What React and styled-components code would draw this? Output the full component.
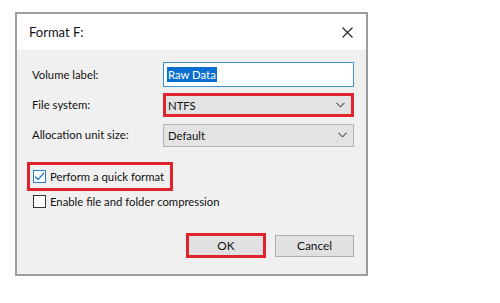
import React from "react";
import styled, { createGlobalStyle } from "styled-components";

const Global = createGlobalStyle`
  html, body { margin: 0; padding: 0; background: #fff; }
  body { font-family: Lato, "Noto Sans", sans-serif; }
`;

const Page = styled.div`
  width: 500px;
  height: 303px;
  padding: 12px 0 0 15px;
  box-sizing: border-box;
`;

const Dialog = styled.div`
  width: 353px;
  height: 264px;
  box-sizing: border-box;
  border: 2px solid #9d9d9d;
  background: #f0f0f0;
  display: flex;
  flex-direction: column;
`;

const TitleBar = styled.div`
  height: 36px;
  background: #fff;
  display: flex;
  align-items: center;
  justify-content: space-between;
  padding: 0 12px 0 12px;
  font-size: 13px;
  color: #111;
`;

const Close = styled.svg`
  width: 11px;
  height: 11px;
  margin-right: 1px;
`;

const Body = styled.div`
  flex: 1;
  padding: 12px 11px 0 15px;
  display: flex;
  flex-direction: column;
`;

const Form = styled.div`
  display: grid;
  grid-template-columns: 131px 191px;
  row-gap: 6px;
  align-items: center;
  font-size: 11.3px;
  color: #111;
`;

const Label = styled.div`
  line-height: 24px;
`;

const TextInput = styled.div`
  height: 25px;
  box-sizing: border-box;
  border: 1px solid #3a92d6;
  background: #fff;
  display: flex;
  align-items: center;
  padding-left: 3px;
`;

const Selected = styled.span`
  background: #0a6fd0;
  color: #fff;
  padding: 0 1px;
  line-height: 15px;
`;

const Combo = styled.div`
  height: ${(p) => (p.$hl ? 24 : 23)}px;
  box-sizing: border-box;
  border: ${(p) => (p.$hl ? "3px solid #e0242d" : "1px solid #b4b4b4")};
  background: #e3e3e3;
  display: flex;
  align-items: center;
  justify-content: space-between;
  padding: 0 6px 0 ${(p) => (p.$hl ? 2 : 4)}px;
`;

const Chevron = styled.svg`
  width: 9px;
  height: 6px;
`;

const Options = styled.div`
  margin-top: 15px;
  margin-left: -5px;
  display: flex;
  flex-direction: column;
  align-items: flex-start;
  font-size: 11.3px;
  color: #111;
`;

const OptionRow = styled.div`
  display: flex;
  align-items: center;
  gap: 4px;
  box-sizing: border-box;
  height: ${(p) => (p.$hl ? 29 : 16)}px;
  padding: 0 6px 0 ${(p) => (p.$hl ? 3 : 6)}px;
  border: ${(p) => (p.$hl ? "3px solid #e0242d" : "none")};
  margin-top: ${(p) => (p.$hl ? 0 : 2)}px;
`;

const Box = styled.div`
  width: 13px;
  height: 13px;
  box-sizing: border-box;
  border: 1px solid ${(p) => (p.$checked ? "#2a7fd0" : "#333")};
  background: #fff;
  display: flex;
  align-items: center;
  justify-content: center;
`;

const Buttons = styled.div`
  margin-top: auto;
  margin-bottom: 16px;
  display: flex;
  justify-content: flex-end;
  align-items: center;
  gap: 9px;
  padding-right: 1px;
`;

const Button = styled.div`
  width: ${(p) => (p.$hl ? 80 : 79)}px;
  height: ${(p) => (p.$hl ? 25 : 22)}px;
  box-sizing: border-box;
  border: ${(p) => (p.$hl ? "3px solid #e0242d" : "1px solid #adadad")};
  background: #e1e1e1;
  display: flex;
  align-items: center;
  justify-content: center;
  font-size: 11.8px;
  color: #111;
`;

const ChevronIcon = () => (
  <Chevron viewBox="0 0 9 6">
    <path d="M0.5 0.8 L4.5 4.8 L8.5 0.8" fill="none" stroke="#555" strokeWidth="1.1" />
  </Chevron>
);

export default function App() {
  return (
    <Page>
      <Global />
      <Dialog>
        <TitleBar>
          <span>Format F:</span>
          <Close viewBox="0 0 11 11">
            <path d="M0.5 0.5 L10.5 10.5 M10.5 0.5 L0.5 10.5" stroke="#222" strokeWidth="1.1" />
          </Close>
        </TitleBar>
        <Body>
          <Form>
            <Label>Volume label:</Label>
            <TextInput>
              <Selected>Raw Data</Selected>
            </TextInput>
            <Label>File system:</Label>
            <Combo $hl>
              <span>NTFS</span>
              <ChevronIcon />
            </Combo>
            <Label>Allocation unit size:</Label>
            <Combo>
              <span>Default</span>
              <ChevronIcon />
            </Combo>
          </Form>
          <Options>
            <OptionRow $hl>
              <Box $checked>
                <svg width="11" height="9" viewBox="0 0 11 9">
                  <path d="M1 4.5 L4 7.5 L10 1" fill="none" stroke="#2a7fd0" strokeWidth="1.3" />
                </svg>
              </Box>
              <span>Perform a quick format</span>
            </OptionRow>
            <OptionRow>
              <Box />
              <span>Enable file and folder compression</span>
            </OptionRow>
          </Options>
          <Buttons>
            <Button $hl>OK</Button>
            <Button>Cancel</Button>
          </Buttons>
        </Body>
      </Dialog>
    </Page>
  );
}
